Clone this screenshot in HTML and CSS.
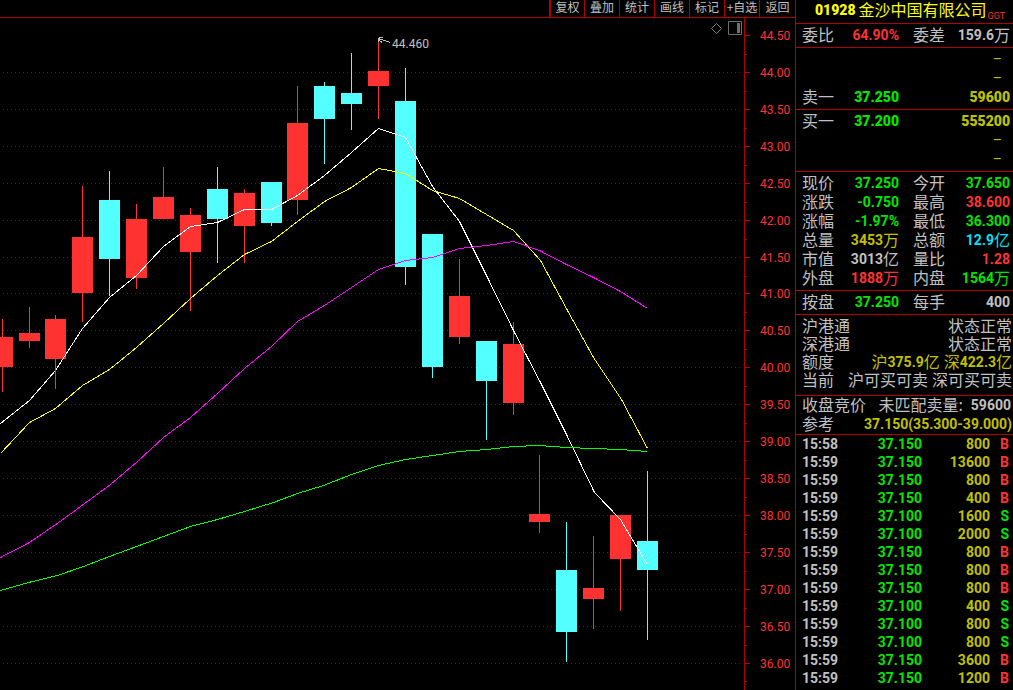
FILE: index.html
```html
<!DOCTYPE html>
<html lang="zh-CN">
<head>
<meta charset="utf-8">
<title>01928 金沙中国有限公司</title>
<link rel="stylesheet" href="styles.css">
</head>
<body>
<div class="terminal">
  <main class="main">
    <nav class="toolbar" aria-label="图表工具">
      <button type="button">复权</button>
      <button type="button">叠加</button>
      <button type="button">统计</button>
      <button type="button">画线</button>
      <button type="button">标记</button>
      <button type="button">+自选</button>
      <button type="button">返回</button>
    </nav>
    <div class="chart">
      <svg class="plot" id="plot" viewBox="0 18 795 672" role="img" aria-label="K线图"></svg>
      <div class="chart-tools">
        <button type="button" aria-label="标记点"><svg width="13" height="13" viewBox="0 0 13 13"><path d="M6.5 1.5l5 5-5 5-5-5z" fill="none" stroke="#808080"/></svg></button>
        <button type="button" aria-label="侧栏"><svg width="14" height="14" viewBox="0 0 14 14"><path d="M.5.5h13v13H.5z" fill="none" stroke="#6e6e6e"/><path d="M9 2h3v10H9z" fill="#6e6e6e"/></svg></button>
      </div>
    </div>
  </main>

  <aside class="side">
    <h1 class="title"><b>01928</b><span>金沙中国有限公司</span><small>GGT</small></h1>

    <dl class="block pairs single">
      <div><dt>委比</dt><dd class="red">64.90%</dd></div>
      <div><dt>委差</dt><dd>159.6<i>万</i></dd></div>
    </dl>

    <div class="block book">
      <div class="level"><span></span><span></span><b class="none">–</b></div>
      <div class="level"><span></span><span></span><b class="none">–</b></div>
      <div class="level"><span>卖一</span><b class="green">37.250</b><b class="yellow">59600</b></div>
    </div>
    <div class="block book">
      <div class="level"><span>买一</span><b class="green">37.200</b><b class="yellow">555200</b></div>
      <div class="level"><span></span><span></span><b class="none">–</b></div>
      <div class="level"><span></span><span></span><b class="none">–</b></div>
    </div>

    <dl class="block pairs">
      <div><dt>现价</dt><dd class="green">37.250</dd></div>
      <div><dt>今开</dt><dd class="green">37.650</dd></div>
      <div><dt>涨跌</dt><dd class="green">-0.750</dd></div>
      <div><dt>最高</dt><dd class="red">38.600</dd></div>
      <div><dt>涨幅</dt><dd class="green">-1.97%</dd></div>
      <div><dt>最低</dt><dd class="green">36.300</dd></div>
      <div><dt>总量</dt><dd class="yellow">3453<i>万</i></dd></div>
      <div><dt>总额</dt><dd class="cyan">12.9<i>亿</i></dd></div>
      <div><dt>市值</dt><dd>3013<i>亿</i></dd></div>
      <div><dt>量比</dt><dd class="red">1.28</dd></div>
      <div><dt>外盘</dt><dd class="red">1888<i>万</i></dd></div>
      <div><dt>内盘</dt><dd class="green">1564<i>万</i></dd></div>
    </dl>

    <dl class="block pairs single">
      <div><dt>按盘</dt><dd class="green">37.250</dd></div>
      <div><dt>每手</dt><dd>400</dd></div>
    </dl>

    <dl class="block lines connect">
      <div><dt>沪港通</dt><dd><i>状态正常</i></dd></div>
      <div><dt>深港通</dt><dd><i>状态正常</i></dd></div>
      <div><dt>额度</dt><dd class="yellow"><span><i>沪</i>375.9<i>亿</i></span><span><i>深</i>422.3<i>亿</i></span></dd></div>
      <div><dt>当前</dt><dd><i>沪可买可卖</i><i>深可买可卖</i></dd></div>
    </dl>

    <dl class="block lines auction">
      <div><dt>收盘竞价</dt><dd class="wide"><i>未匹配卖量:</i><span>59600</span></dd></div>
      <div><dt>参考</dt><dd class="yellow">37.150(35.300-39.000)</dd></div>
    </dl>

    <table class="ticks">
      <tbody>
        <tr><td>15:58</td><td>37.150</td><td>800</td><td class="red">B</td></tr>
        <tr><td>15:59</td><td>37.150</td><td>13600</td><td class="red">B</td></tr>
        <tr><td>15:59</td><td>37.150</td><td>800</td><td class="red">B</td></tr>
        <tr><td>15:59</td><td>37.150</td><td>400</td><td class="red">B</td></tr>
        <tr><td>15:59</td><td>37.100</td><td>1600</td><td class="green">S</td></tr>
        <tr><td>15:59</td><td>37.100</td><td>2000</td><td class="green">S</td></tr>
        <tr><td>15:59</td><td>37.150</td><td>800</td><td class="red">B</td></tr>
        <tr><td>15:59</td><td>37.150</td><td>800</td><td class="red">B</td></tr>
        <tr><td>15:59</td><td>37.150</td><td>800</td><td class="red">B</td></tr>
        <tr><td>15:59</td><td>37.100</td><td>400</td><td class="green">S</td></tr>
        <tr><td>15:59</td><td>37.100</td><td>800</td><td class="green">S</td></tr>
        <tr><td>15:59</td><td>37.100</td><td>800</td><td class="green">S</td></tr>
        <tr><td>15:59</td><td>37.150</td><td>3600</td><td class="red">B</td></tr>
        <tr><td>15:59</td><td>37.150</td><td>1200</td><td class="red">B</td></tr>
      </tbody>
    </table>
  </aside>
</div>
<script src="chart.js"></script>
</body>
</html>
```

FILE: styles.css
```css
:root {
  --line: #b00000;
  --red: #ff3232;
  --green: #00e600;
  --yellow: #c0c000;
  --cyan: #02e2f4;
  --text: #c0c0c0;
  --cjk: "Noto Sans CJK SC", sans-serif;
}

* { box-sizing: border-box; }

body {
  margin: 0;
  background: #000;
  color: var(--text);
  font-family: Roboto, "Noto Sans CJK SC", sans-serif;
}

button {
  margin: 0;
  padding: 0;
  border: 0;
  background: none;
  color: inherit;
  font: inherit;
}

h1, dl, dd { margin: 0; }
i { font-style: normal; }

.terminal {
  display: grid;
  grid-template-columns: minmax(0, 1fr) 218px;
  min-height: 100vh;
}

/* toolbar */
.toolbar {
  display: flex;
  justify-content: flex-end;
  height: 18px;
  border-bottom: 1px solid var(--line);
  font-family: var(--cjk);
  font-size: 12px;
  line-height: 14px;
}

.toolbar button {
  width: 35px;
  padding-bottom: 3px;
  border-left: 1px solid var(--line);
  white-space: nowrap;
}

.toolbar button:first-child { border-left-width: 2px; }
.toolbar button:last-child { width: 36px; }

/* chart */
.chart { position: relative; }

.plot {
  display: block;
  width: 100%;
}

.plot text {
  font-family: Roboto, sans-serif;
  font-size: 12px;
}

.axis-label { fill: var(--red); }
.peak-label { fill: var(--text); }
.sharp { shape-rendering: crispEdges; }

.chart-tools {
  position: absolute;
  top: 3px;
  right: 53px;
  display: flex;
  align-items: center;
  gap: 5px;
}

.chart-tools svg { display: block; }

/* quote panel */
.side {
  border-left: 1px solid var(--line);
  font-size: 14px;
  font-weight: 700;
  line-height: 19px;
}

.title {
  display: flex;
  align-items: center;
  gap: 3px;
  height: 24px;
  padding: 0 8px 2px 19px;
  border-bottom: 1px solid var(--line);
  color: #ff0;
  font-size: 14px;
  white-space: nowrap;
}

.title span {
  padding-bottom: 2px;
  font-family: var(--cjk);
  font-size: 16px;
  font-weight: 400;
  line-height: 17px;
}

.title small {
  align-self: flex-end;
  margin-left: -2px;
  color: var(--red);
  font-size: 9px;
  font-weight: 400;
  line-height: 9px;
}

.block {
  padding: 2px 3px 2px 6px;
  border-bottom: 1px solid var(--line);
}

.block i, .block dt, .level span:first-child {
  padding-bottom: 2px;
  font-family: var(--cjk);
  font-size: 16px;
  font-weight: 400;
  line-height: 17px;
}

.block dt, .level span { color: var(--text); }

.pairs {
  display: grid;
  grid-template-columns: 1fr 1fr;
  column-gap: 14px;
}

.pairs > div, .lines > div {
  display: flex;
  justify-content: space-between;
  align-items: center;
  height: 19px;
  white-space: nowrap;
}

.pairs dd, .lines dd {
  display: flex;
  align-items: center;
}

.level {
  display: grid;
  grid-template-columns: 1fr 65px 111px;
  align-items: center;
  height: 19px;
}

.level b { text-align: right; }

.level .none {
  padding-right: 8px;
  color: var(--yellow);
  font-weight: 400;
}

.lines { padding-right: 1px; }
.lines dd { gap: 4px; }
.lines dd span { display: flex; align-items: center; }
.lines .wide { gap: 8px; padding-right: 1px; }

.connect { padding-bottom: 6px; }
.connect > div { height: 18px; }

.auction {
  padding-top: 0;
  padding-bottom: 0;
}

.ticks {
  width: 100%;
  border-collapse: collapse;
  table-layout: fixed;
  line-height: 18px;
}

.ticks td {
  width: 68px;
  padding: 0;
  text-align: right;
}

.ticks td:nth-child(1) {
  width: 58px;
  padding-left: 6px;
  text-align: left;
}

.ticks td:nth-child(2) { color: var(--green); }
.ticks td:nth-child(3) { color: var(--yellow); }

.ticks td:nth-child(4) {
  width: auto;
  padding-right: 4px;
}

.red, .ticks td.red { color: var(--red); }
.green, .ticks td.green { color: var(--green); }
.yellow { color: var(--yellow); }
.cyan { color: var(--cyan); }
```

FILE: chart.js
```js
const NS = "http://www.w3.org/2000/svg";
const plot = document.getElementById("plot");

function add(name, attrs, text) {
  const el = document.createElementNS(NS, name);
  for (const key in attrs) el.setAttribute(key, attrs[key]);
  if (text) el.textContent = text;
  plot.appendChild(el);
}

// Axis, ticks and dotted grid
const AXIS = 744;
const levels = [35, 72, 109, 146, 183, 220, 257, 293, 330, 367, 404, 441, 478, 515, 552, 589, 626, 663];
add("rect", { x: AXIS, y: 18, width: 1, height: 672, fill: "#b00000", class: "sharp" });
levels.forEach((y, i) => {
  if (i > 0) {
    add("line", { x1: 3, x2: 742, y1: y + 0.5, y2: y + 0.5, stroke: "#a00000", "stroke-dasharray": "1 3", class: "sharp" });
  }
  add("rect", { x: AXIS, y, width: 6, height: 1, fill: "#b00000", class: "sharp" });
  add("rect", { x: AXIS, y: y + (i === levels.length - 1 ? 18 : 19), width: 3, height: 1, fill: "#b00000", class: "sharp" });
  add("text", { x: 760, y: y + 5, class: "axis-label" }, (44.5 - i * 0.5).toFixed(2));
});

// Candles: centre x, wick top, body top, body bottom, wick bottom, colour
const UP = "#ff3232";
const DOWN = "#54ffff";
[
  [2, 319, 337, 367, 392, UP], [29, 307, 333, 341, 348, UP], [55, 315, 319, 359, 389, UP],
  [82, 186, 237, 293, 322, UP], [109, 171, 200, 259, 296, DOWN], [136, 204, 219, 278, 289, UP],
  [163, 167, 197, 219, 219, UP], [190, 208, 215, 252, 311, UP], [217, 167, 189, 219, 263, DOWN],
  [244, 189, 193, 226, 263, UP], [271, 182, 182, 223, 226, DOWN], [297, 86, 123, 200, 215, UP],
  [324, 82, 86, 119, 164, DOWN], [351, 53, 93, 104, 130, DOWN], [378, 39, 71, 86, 119, UP],
  [405, 68, 101, 267, 285, DOWN], [432, 234, 234, 367, 378, DOWN], [459, 259, 296, 337, 344, UP],
  [486, 341, 341, 381, 440, DOWN], [513, 322, 344, 403, 415, UP], [539, 455, 514, 522, 533, UP],
  [566, 522, 570, 632, 662, DOWN], [593, 536, 588, 599, 629, UP], [620, 515, 515, 559, 611, UP],
  [647, 471, 541, 570, 640, DOWN]
].forEach(([x, high, top, bottom, low, fill]) => {
  add("rect", { x, y: high, width: 1, height: low - high, fill, class: "sharp" });
  add("rect", { x: x - 10, y: top, width: 21, height: bottom - top, fill, class: "sharp" });
});

// Moving averages
[
  ["#fff", "0,423 29,400 55,370 82,328 109,297 136,275 163,246 190,226 217,222 244,209 271,209 297,195 324,175 351,152 378,128 405,137 432,186 459,221 486,275 513,330 540,382 566,434 594,492 620,519 647,564"],
  ["#ff0", "0,453 29,422 55,408 82,385 109,369 136,347 163,323 190,298 217,275 244,254 271,241 297,221 324,201 351,187 378,168 405,173 432,190 459,198 486,214 513,230 540,260 567,310 593,357 621,399 647,448"],
  ["#f0f", "0,557 29,542 61,520 110,484 137,461 163,437 190,417 217,393 244,368 271,346 297,321 324,305 351,287 378,269 405,260 432,257 459,248 486,245 513,241 539,250 566,264 593,277 620,291 647,308"],
  ["#0f0", "0,590 28,582 57,575 83,566 109,556 136,546 163,536 190,526 217,519 244,511 273,502 297,493 323,485 351,474 378,465 405,459 432,455 459,451 486,449 513,446 539,445 566,447 593,448 620,449 647,451"]
].forEach(([stroke, points]) => {
  add("polyline", { points, fill: "none", stroke, transform: "translate(0.5 0.5)", class: "sharp" });
});

// Highest price marker
add("path", { d: "M378 39.5h3l4 1 5 2M378.5 42v-3.500l2-1h2M379 40l3 2.500", fill: "none", stroke: "#c0c0c0", class: "sharp" });
add("text", { x: 392, y: 48, class: "peak-label" }, "44.460");
```
